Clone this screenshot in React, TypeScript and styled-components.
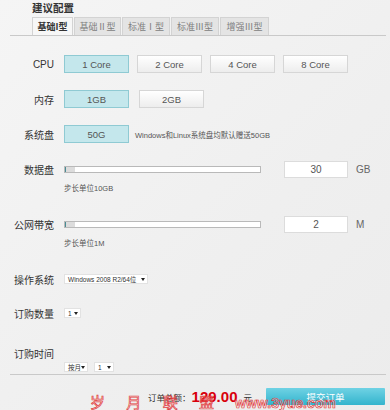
import styled, { createGlobalStyle } from 'styled-components'

const GlobalStyle = createGlobalStyle`
    body{
        margin: 0;
        background: #f0f0f0;
        font-family: "Liberation Sans", "Noto Sans CJK SC", sans-serif;
        color: #444;
    }
`

const Page = styled.div`
    position: relative;
    width: 390px;
    height: 410px;
    overflow: hidden;
    background: linear-gradient(135deg, #f5f5f5 0%, #efefef 60%, #ececec 100%);
`

const Title = styled.div`
    padding: 1px 0 0 32px;
    height: 14px;
    font-family: "Noto Sans CJK SC", sans-serif;
    font-size: 10.5px;
    line-height: 13px;
    font-weight: 700;
    color: #333;
`

const Tabs = styled.div`
    display: flex;
    gap: 1px;
    padding-left: 32px;
    height: 19px;
    margin-top: 1px;
    align-items: flex-end;
`

const Tab = styled.div<{ $active?: boolean; $width: number }>`
    height: 18px;
    padding: 0 4px;
    box-sizing: border-box;
    display: flex;
    align-items: center;
    justify-content: center;
    width: ${p => p.$width}px;
    border: 1px solid #d3d3d3;
    border-bottom: none;
    background: ${p => p.$active ? '#f7f7f7' : '#e4e4e4'};
    font-family: "Noto Sans CJK SC", sans-serif;
    font-size: 9px;
    font-weight: ${p => p.$active ? 700 : 400};
    color: ${p => p.$active ? '#333' : '#7e7e7e'};
    white-space: nowrap;
`

const Divider = styled.div<{ $mt?: number }>`
    height: 1px;
    margin: ${p => p.$mt || 0}px 4px 0 10px;
    background: #c9c9c9;
`

const Row = styled.div<{ $mt: number; $h?: number }>`
    display: flex;
    align-items: center;
    margin-top: ${p => p.$mt}px;
    height: ${p => p.$h || 18}px;
`

const Label = styled.div`
    width: 54px;
    margin-right: 10px;
    text-align: right;
    font-family: "Liberation Sans", "Noto Sans CJK SC", sans-serif;
    font-size: 10px;
    color: #333;
    white-space: nowrap;
`

const Options = styled.div<{ $gap: number }>`
    display: flex;
    gap: ${p => p.$gap}px;
`

const OptButton = styled.div<{ $active?: boolean }>`
    width: 65px;
    height: 18px;
    box-sizing: border-box;
    display: flex;
    align-items: center;
    justify-content: center;
    border: 1px solid ${p => p.$active ? '#8fcad3' : '#d6d6d6'};
    background: ${p => p.$active ? '#c4e7ec' : 'linear-gradient(#ffffff, #ededed)'};
    font-size: 9.5px;
    color: #555;
`

const Note = styled.span`
    margin-left: 6px;
    font-family: "Liberation Sans", "Noto Sans CJK SC", sans-serif;
    font-size: 7.5px;
    color: #555;
`

const Slider = styled.div`
    position: relative;
    width: 197px;
    height: 7px;
    box-sizing: border-box;
    border: 1px solid #b9b9b9;
    background: #fff;
`

const Handle = styled.div`
    position: absolute;
    left: 0;
    top: 0;
    bottom: 0;
    width: 9px;
    background: #dcdcdc;
    border-left: 1px solid #4a8c94;
`

const NumInput = styled.div`
    width: 64px;
    height: 17px;
    margin-left: 23px;
    box-sizing: border-box;
    display: flex;
    align-items: center;
    justify-content: center;
    background: #fff;
    border: 1px solid #dcdcdc;
    font-size: 10px;
    color: #555;
`

const Unit = styled.span`
    margin-left: 8px;
    font-size: 10px;
    color: #666;
`

const Hint = styled.div<{ $mt: number }>`
    margin: ${p => p.$mt}px 0 0 64px;
    height: 10px;
    line-height: 10px;
    font-family: "Liberation Sans", "Noto Sans CJK SC", sans-serif;
    font-size: 7.5px;
    color: #555;
`

const Select = styled.div<{ $w: number }>`
    width: ${p => p.$w}px;
    height: 10px;
    box-sizing: border-box;
    display: flex;
    align-items: center;
    justify-content: space-between;
    padding: 0 2px 0 3px;
    background: #fff;
    border: 1px solid #e2e2e2;
    font-family: "Liberation Sans", "Noto Sans CJK SC", sans-serif;
    font-size: 6.5px;
    color: #333;
    white-space: nowrap;
`

const Arrow = styled.span`
    width: 0;
    height: 0;
    border-left: 2.5px solid transparent;
    border-right: 2.5px solid transparent;
    border-top: 3px solid #222;
`

const SelectLine = styled.div`
    display: flex;
    gap: 6px;
    margin: 3px 0 0 64px;
    height: 10px;
`

const Footer = styled.div`
    display: flex;
    align-items: center;
    justify-content: flex-end;
    margin: 13px 5px 0 0;
    height: 17px;
`

const TotalLabel = styled.span`
    font-family: "Noto Sans CJK SC", sans-serif;
    font-size: 8.5px;
    color: #333;
`

const Price = styled.span`
    margin-left: 1px;
    font-size: 15px;
    font-weight: 700;
    color: #d8000c;
`

const Yuan = styled.span`
    margin: 0 14px 0 6px;
    font-family: "Noto Sans CJK SC", sans-serif;
    font-size: 8.5px;
    color: #333;
`

const Submit = styled.div`
    width: 119px;
    height: 17px;
    display: flex;
    align-items: center;
    justify-content: center;
    background: linear-gradient(#6fd2e4, #33b4cd);
    border-radius: 1px;
    font-family: "Noto Sans CJK SC", sans-serif;
    font-size: 9.5px;
    color: #fff;
`

/* watermark stamped over the footer */
const Watermark = styled.div`
    position: absolute;
    left: 90px;
    top: 391px;
    display: flex;
    align-items: baseline;
    pointer-events: none;
    color: rgba(255, 255, 255, 0.25);
    -webkit-text-stroke: 0.7px #e23a3a;

    .cn{
        font-family: "Noto Sans CJK SC", sans-serif;
        font-size: 15px;
        letter-spacing: 9px;
    }

    .url{
        margin-left: 12px;
        font-family: "Liberation Sans", sans-serif;
        font-weight: 700;
        font-size: 14px;
        letter-spacing: 0px;
    }
`

const tabs = [
    { name: '基础I型', w: 41 },
    { name: '基础Ⅱ型', w: 47 },
    { name: '标准Ⅰ型', w: 48 },
    { name: '标准Ⅲ型', w: 48 },
    { name: '增强Ⅲ型', w: 49 },
]

const App = () => {
    return (
        <Page>
            <GlobalStyle />
            <Title>建议配置</Title>
            <Tabs>
                {tabs.map((t, i) => (
                    <Tab key={t.name} $active={i === 0} $width={t.w}>{t.name}</Tab>
                ))}
            </Tabs>
            <Divider />

            <Row $mt={19}>
                <Label>CPU</Label>
                <Options $gap={8}>
                    <OptButton $active>1 Core</OptButton>
                    <OptButton>2 Core</OptButton>
                    <OptButton>4 Core</OptButton>
                    <OptButton>8 Core</OptButton>
                </Options>
            </Row>

            <Row $mt={17}>
                <Label>内存</Label>
                <Options $gap={10}>
                    <OptButton $active>1GB</OptButton>
                    <OptButton>2GB</OptButton>
                </Options>
            </Row>

            <Row $mt={17}>
                <Label>系统盘</Label>
                <OptButton $active>50G</OptButton>
                <Note>Windows和Linux系统盘均默认赠送50GB</Note>
            </Row>

            <Row $mt={17}>
                <Label>数据盘</Label>
                <Slider><Handle /></Slider>
                <NumInput>30</NumInput>
                <Unit>GB</Unit>
            </Row>
            <Hint $mt={6}>步长单位10GB</Hint>

            <Row $mt={21}>
                <Label>公网带宽</Label>
                <Slider><Handle /></Slider>
                <NumInput>2</NumInput>
                <Unit>M</Unit>
            </Row>
            <Hint $mt={6}>步长单位1M</Hint>

            <Row $mt={24} $h={12}>
                <Label>操作系统</Label>
                <Select $w={84}>Windows 2008 R2/64位 <Arrow /></Select>
            </Row>

            <Row $mt={22} $h={12}>
                <Label>订购数量</Label>
                <Select $w={17}>1 <Arrow /></Select>
            </Row>

            <Row $mt={28} $h={12}>
                <Label>订购时间</Label>
            </Row>
            <SelectLine>
                <Select $w={24}>按月 <Arrow /></Select>
                <Select $w={20}>1 <Arrow /></Select>
            </SelectLine>
            <Divider $mt={2} />

            <Footer>
                <TotalLabel>订单总额：</TotalLabel>
                <Price>129.00</Price>
                <Yuan>元</Yuan>
                <Submit>提交订单</Submit>
            </Footer>

            <Watermark>
                <span className="cn">岁 月 联 盟</span>
                <span className="url">www.3yue.com</span>
            </Watermark>
        </Page>
    )
}

export default App
